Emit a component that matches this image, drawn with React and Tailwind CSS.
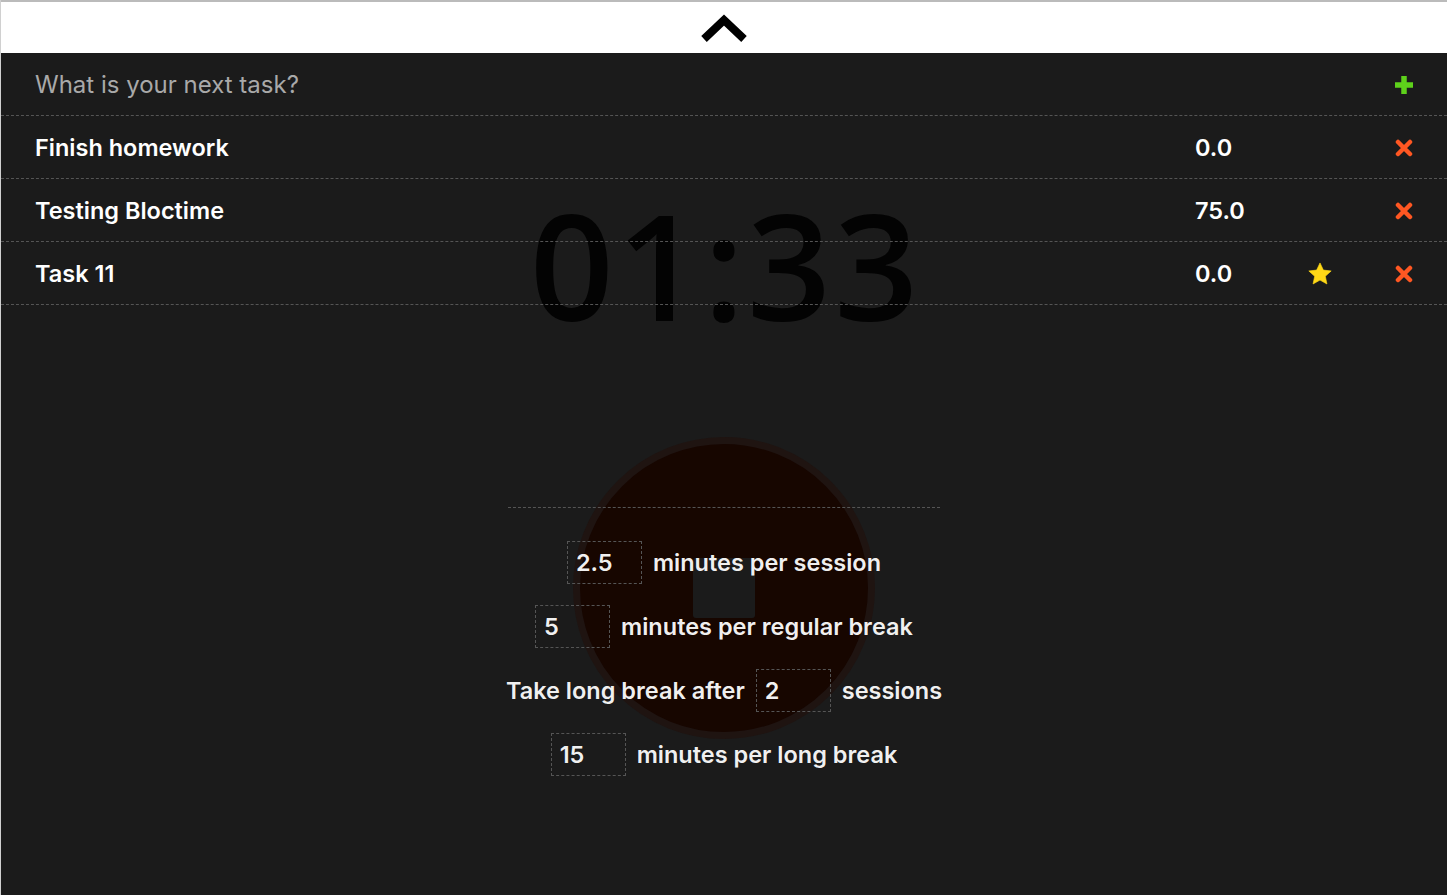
import React from "react";

const TASKS = [
  { name: "Finish homework", score: "0.0", starred: false },
  { name: "Testing Bloctime", score: "75.0", starred: false },
  { name: "Task 11", score: "0.0", starred: true },
];

const ChevronUp = () => (
  <svg width="48" height="32" viewBox="0 0 48 32">
    <polyline
      points="4,27 24,8 44,27"
      fill="none"
      stroke="#000"
      strokeWidth="8"
      strokeLinejoin="miter"
    />
  </svg>
);

const Plus = () => (
  <svg width="20" height="20" viewBox="0 0 20 20">
    <path d="M10 1v18M1 10h18" stroke="#5ed11b" strokeWidth="5.5" />
  </svg>
);

const Cross = () => (
  <svg width="18" height="18" viewBox="0 0 18 18">
    <path d="M3 3l12 12M15 3L3 15" stroke="#ff5722" strokeWidth="4.5" strokeLinecap="round" />
  </svg>
);

const Star = () => (
  <svg width="26" height="26" viewBox="0 0 24 24">
    <path
      d="M12 1.8l3.1 6.6 7.2.8-5.4 4.9 1.5 7.1L12 17.6l-6.4 3.6 1.5-7.1L1.7 9.2l7.2-.8z"
      fill="#ffd816"
      stroke="#ffd816"
      strokeWidth="0.6"
      strokeLinejoin="round"
    />
  </svg>
);

const Field = ({ value }) => (
  <div className="w-[75px] h-[43px] shrink-0 border border-dashed border-[#555] pl-[8px] flex items-center">
    {value}
  </div>
);

export default function App() {
  return (
    <div className="h-[895px] w-full flex flex-col bg-[#1b1b1b] font-['Inter',sans-serif] border-l border-[#d0d0d0] overflow-hidden">
      {/* ---------- HEADER ---------- */}
      <div className="h-[53px] bg-white border-t-2 border-[#bbb] flex items-start justify-center pt-[10px]">
        <ChevronUp />
      </div>

      {/* ---------- MAIN ---------- */}
      <div className="relative flex-1 flex flex-col items-center">
        {/* timer */}
        <div className="mt-[138px] pl-[3px] text-[147px] leading-none tracking-[3px] font-semibold text-[#030303] font-['Open_Sans',sans-serif]">
          01:33
        </div>

        {/* circle + settings share one grid cell */}
        <div className="grid mt-[99px] justify-items-center">
          <div className="col-start-1 row-start-1 w-[302px] h-[302px] rounded-full bg-[#170600] border-[7px] border-[#1f1411] flex items-center justify-center">
            <div className="w-[62px] h-[60px] rounded-[3px] bg-[#1b1b1b]" />
          </div>

          <div className="col-start-1 row-start-1 mt-[70px] w-[432px] border-t border-dashed border-[#555] pt-[33px] flex flex-col items-center gap-[21px] text-[23.5px] font-semibold text-white/95 whitespace-nowrap">
            <div className="flex items-center gap-[11px]">
              <Field value="2.5" />
              <span>minutes per session</span>
            </div>
            <div className="flex items-center gap-[11px]">
              <Field value="5" />
              <span>minutes per regular break</span>
            </div>
            <div className="flex items-center gap-[11px]">
              <span>Take long break after</span>
              <Field value="2" />
              <span>sessions</span>
            </div>
            <div className="flex items-center gap-[11px]">
              <Field value="15" />
              <span>minutes per long break</span>
            </div>
          </div>
        </div>

        {/* ---------- TASK LIST (over the timer) ---------- */}
        <div className="absolute inset-x-0 top-0">
          <div className="h-[63px] flex items-center pl-[34px] pr-[33px] pt-[1px] border-b border-dashed border-[#555]">
            <span className="flex-1 text-[24px] text-[#a9a9a9]">What is your next task?</span>
            <Plus />
          </div>

          {TASKS.map((t) => (
            <div
              key={t.name}
              className="h-[63px] flex items-center pl-[34px] pr-[33px] pt-[1px] border-b border-dashed border-[#555] text-[23.5px] font-semibold text-white"
            >
              <span className="flex-1">{t.name}</span>
              <span className="w-[100px]">{t.score}</span>
              <span className="w-[50px] flex justify-center">{t.starred && <Star />}</span>
              <span className="ml-[49px] w-[20px] flex justify-center">
                <Cross />
              </span>
            </div>
          ))}
        </div>
      </div>
    </div>
  );
}
